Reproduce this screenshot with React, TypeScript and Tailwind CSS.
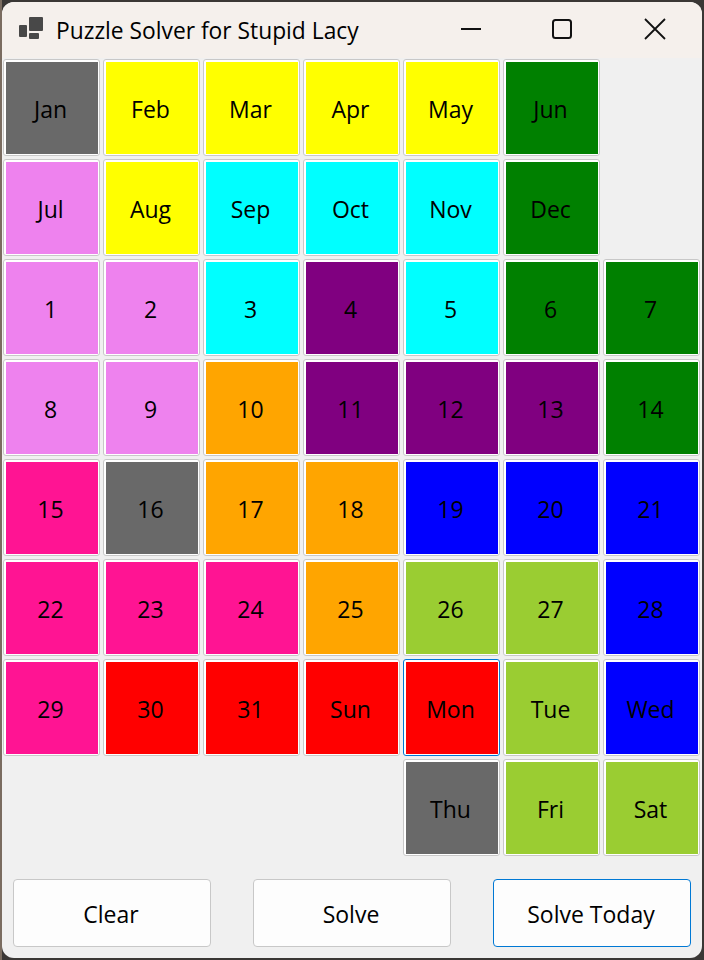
import React from "react";

type Tile = { label: string; color: string } | null;

const gray = "bg-[#696969]";
const yellow = "bg-[#ffff00]";
const green = "bg-[#008000]";
const violet = "bg-[#ee82ee]";
const cyan = "bg-[#00ffff]";
const purple = "bg-[#800080]";
const orange = "bg-[#ffa500]";
const pink = "bg-[#ff1493]";
const blue = "bg-[#0000ff]";
const lime = "bg-[#9acd32]";
const red = "bg-[#ff0000]";

const t = (label: string, color: string): Tile => ({ label, color });

const tiles: Tile[] = [
  t("Jan", gray), t("Feb", yellow), t("Mar", yellow), t("Apr", yellow), t("May", yellow), t("Jun", green), null,
  t("Jul", violet), t("Aug", yellow), t("Sep", cyan), t("Oct", cyan), t("Nov", cyan), t("Dec", green), null,
  t("1", violet), t("2", violet), t("3", cyan), t("4", purple), t("5", cyan), t("6", green), t("7", green),
  t("8", violet), t("9", violet), t("10", orange), t("11", purple), t("12", purple), t("13", purple), t("14", green),
  t("15", pink), t("16", gray), t("17", orange), t("18", orange), t("19", blue), t("20", blue), t("21", blue),
  t("22", pink), t("23", pink), t("24", pink), t("25", orange), t("26", lime), t("27", lime), t("28", blue),
  t("29", pink), t("30", red), t("31", red), t("Sun", red), t("Mon", red), t("Tue", lime), t("Wed", blue),
  null, null, null, null, t("Thu", gray), t("Fri", lime), t("Sat", lime),
];

const App = () => {
  return (
    <div className="w-[704px] h-[960px] bg-[#3a3735] border-l-2 border-l-[#7a6c60] pt-[2px] overflow-hidden font-['Open_Sans','Noto_Sans',sans-serif] text-black">
      <div className="w-[700px] h-[956px] rounded-[12px] overflow-hidden bg-[#f0f0f0] flex flex-col">
        {/* Title bar */}
        <div className="h-[56px] shrink-0 bg-[#f5f0ec] flex items-center">
          <svg className="ml-[16px]" width="28" height="28" viewBox="0 0 28 28">
            <rect x="1" y="9" width="8" height="12" rx="1" fill="#484848" />
            <rect x="11" y="1" width="14" height="14" rx="1" fill="#484848" />
            <rect x="11" y="17" width="10" height="6" rx="1" fill="#484848" />
          </svg>
          <span className="ml-[10px] mt-[2px] text-[22.8px] leading-none">Puzzle Solver for Stupid Lacy</span>
          <div className="ml-auto flex items-center pb-[2px]">
            <div className="w-[90px] flex justify-center">
              <svg width="20" height="20" viewBox="0 0 20 20">
                <path d="M0 10H20" stroke="#111" strokeWidth="2" />
              </svg>
            </div>
            <div className="w-[92px] flex justify-center">
              <svg width="20" height="20" viewBox="0 0 20 20">
                <rect x="1" y="1" width="18" height="18" rx="2.5" fill="none" stroke="#111" strokeWidth="2" />
              </svg>
            </div>
            <div className="w-[94px] flex justify-center">
              <svg width="22" height="22" viewBox="0 0 22 22">
                <path d="M1 1L21 21M21 1L1 21" stroke="#111" strokeWidth="1.8" />
              </svg>
            </div>
          </div>
        </div>

        {/* Tile grid */}
        <div className="grid grid-cols-[repeat(7,97px)] auto-rows-[97px] gap-[3px] pl-[1px] pt-[1px]">
          {tiles.map((tile, index) =>
            tile ? (
              <div
                key={index}
                className={`rounded-[3px] border-[1px] bg-white pl-[2px] pr-[1px] pt-[2px] pb-[1px] ${
                  tile.label === "Mon" ? "border-[#0078d4]" : "border-[#c8c8c8]"
                }`}
              >
                <div className={`w-full h-full flex items-center justify-center text-[23px] pt-[2px] pr-[3px] ${tile.color}`}>
                  {tile.label}
                </div>
              </div>
            ) : (
              <div key={index} />
            )
          )}
        </div>

        {/* Buttons */}
        <div className="flex justify-between pl-[11px] pr-[11px] mt-[23px]">
          {["Clear", "Solve", "Solve Today"].map((label) => (
            <button
              key={label}
              className={`w-[198px] h-[68px] rounded-[4px] border bg-[#fdfdfd] text-[23px] pt-[3px] pr-[2px] ${
                label === "Solve Today" ? "border-[#0078d4]" : "border-[#c8c8c8]"
              }`}
            >
              {label}
            </button>
          ))}
        </div>
      </div>
    </div>
  );
};

export default App;
